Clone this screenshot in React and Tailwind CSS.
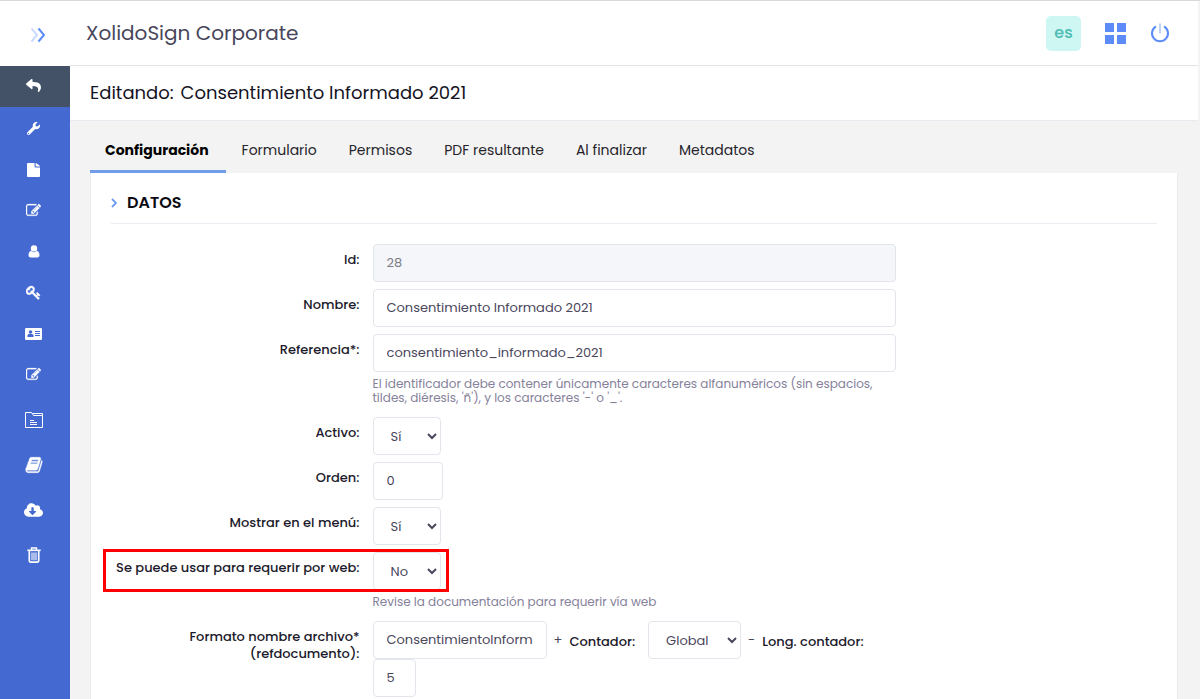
import { useState } from "react";
import {
  FaReply,
  FaWrench,
  FaFile,
  FaCloudDownloadAlt,
} from "react-icons/fa";

function EditIcon() {
  return (
    <svg viewBox="0 0 1792 1792" className="size-[15px]" fill="currentColor" stroke="currentColor" strokeWidth="30">
      <path d="M888 1184l116-116-152-152-116 116v56h96v96h56zm440-720q-16-16-33 1l-350 350q-17 17-1 33t33-1l350-350q17-17 1-33zm80 594v190q0 119-84.5 203.5t-203.5 84.5h-832q-119 0-203.5-84.5t-84.5-203.5v-832q0-119 84.5-203.5t203.5-84.5h832q63 0 117 25 15 7 18 23 3 17-9 29l-49 49q-14 14-32 8-23-6-45-6h-832q-66 0-113 47t-47 113v832q0 66 47 113t113 47h832q66 0 113-47t47-113v-126q0-13 9-22l64-64q15-15 35-7t20 29zm-96-738l288 288-672 672h-288v-288zm444 132l-92 92-288-288 92-92q28-28 68-28t68 28l152 152q28 28 28 68t-28 68z" />
    </svg>
  );
}

function UserIcon() {
  return (
    <svg viewBox="0 0 12 13" className="h-[13px] w-3" fill="currentColor">
      <circle cx="6" cy="3.4" r="3.2" />
      <path d="M3 5.8C1.2 6.4.5 8.2.5 10.3c0 1.3.8 2.2 2 2.2h7c1.2 0 2-.9 2-2.2 0-2.1-.7-3.9-2.5-4.5C8.2 6.7 7.2 7.2 6 7.2S3.8 6.7 3 5.8z" />
    </svg>
  );
}

function KeyIcon() {
  return (
    <svg viewBox="0 0 1792 1792" className="size-[15px]" fill="currentColor" stroke="currentColor" strokeWidth="50">
      <path d="M832 512q0-80-56-136t-136-56-136 56-56 136q0 42 19 83-41-19-83-19-80 0-136 56t-56 136 56 136 136 56 136-56 56-136q0-42-19-83 41 19 83 19 80 0 136-56t56-136zm851 704q0 17-49 66t-66 49q-9 0-28.5-16t-36.5-33-38.5-40-24.5-26l-96 96 220 220q28 28 28 68 0 42-39 81t-81 39q-40 0-68-28l-671-671q-176 131-365 131-163 0-265.5-102.5t-102.5-265.5q0-160 95-313t248-248 313-95q163 0 265.5 102.5t102.5 265.5q0 189-131 365l355 355 96-96q-3-3-26-24.5t-40-38.5-33-36.5-16-28.5q0-17 49-66t66-49q13 0 23 10 6 6 46 44.5t82 79.5 86.5 86 73 78 28.5 41z" />
    </svg>
  );
}

function CardIcon() {
  return (
    <svg viewBox="0 0 17 12" className="h-3 w-[17px]">
      <rect width="17" height="12" rx="1.2" fill="#fff" />
      <g fill="#446ad2">
        <circle cx="5.5" cy="4" r="1.8" />
        <path d="M2.5 9V7.6C2.5 6.5 3.3 6 4.2 6h2.6c.9 0 1.700.5 1.700 1.600V9z" />
        <path d="M10 3h5v1h-5zM10 5h5v1h-5zM10 7h5v1h-5z" />
      </g>
    </svg>
  );
}

function FolderIcon() {
  return (
    <svg viewBox="0 0 18 16" className="h-4 w-[18px]" fill="none" stroke="currentColor">
      <path d="M.5 15.500V.5h6l2 3h9v12z" />
      <path d="M7.500 1.500h10v2.500" />
      <path d="M5 8.500h4M5 10.500h7M5 12.500h7" />
    </svg>
  );
}

function BookIcon() {
  return (
    <svg viewBox="0 0 1792 1792" className="size-[18px]" fill="currentColor" stroke="currentColor" strokeWidth="40">
      <path d="M1703 478q40 57 18 129l-275 906q-19 64-76.5 107.5t-122.5 43.5h-923q-77 0-148.5-53.5t-99.5-131.5q-24-67-2-127 0-4 3-27t4-37q1-8-3-21.5t-3-19.5q2-11 8-21t16.5-23.5 16.5-23.5q23-38 45-91.5t30-91.5q3-10 .5-30t-.5-28q3-11 17-28t17-23q21-36 42-92t25-90q1-9-2.5-32t.5-28q4-13 22-30.5t22-22.5q19-26 42.5-84.5t27.5-96.5q1-8-3-25.5t-2-26.5q2-8 9-18t18-23 17-21q8-12 16.5-30.5t15-35 16-36 19.500-32 26.500-23.500 36-11.500 47.500 5.500l-1 3q38-9 51-9h761q74 0 114 56t18 130l-274 906q-36 119-71.5 153.5t-128.5 34.5h-869q-27 0-38 15-11 16-1 43 24 70 144 70h923q29 0 56-15.5t35-41.5l300-987q7-22 5-57 38 15 59 43zm-1064 2q-4 13 2 22.5t20 9.5h608q13 0 25.5-9.5t16.5-22.5l21-64q4-13-2-22.5t-20-9.5h-608q-13 0-25.5 9.5t-16.5 22.5zm-83 256q-4 13 2 22.5t20 9.5h608q13 0 25.5-9.5t16.5-22.5l21-64q4-13-2-22.5t-20-9.5h-608q-13 0-25.5 9.5t-16.5 22.5z" />
    </svg>
  );
}

function TrashIcon() {
  return (
    <svg viewBox="0 0 14 16" className="h-4 w-3.5" fill="none" stroke="currentColor">
      <path d="M.3 3.300h13.400" strokeWidth="1.600" />
      <path d="M4.500 3V1h5v2" strokeWidth="1.400" />
      <path d="M2.300 4v9.800c0 .8.500 1.300 1.200 1.300h7c.7 0 1.200-.5 1.200-1.300V4" strokeWidth="1.700" />
      <path d="M5 5.500v7.700M7 5.500v7.700M9 5.500v7.700" strokeWidth="1.100" />
    </svg>
  );
}

const mainMenu = [
  { label: "Herramientas", icon: <FaWrench className="size-[13px]" /> },
  { label: "Documento", icon: <FaFile className="h-3.5 w-[13px]" preserveAspectRatio="none" /> },
  { label: "Editar", icon: <EditIcon /> },
  { label: "Usuario", icon: <UserIcon /> },
  { label: "Claves", icon: <KeyIcon /> },
  { label: "Ficha", icon: <CardIcon /> },
  { label: "Editar plantilla", icon: <EditIcon /> },
];

const extraMenu = [
  { label: "Carpetas", icon: <FolderIcon /> },
  { label: "Manual", icon: <BookIcon /> },
  { label: "Descargas", icon: <FaCloudDownloadAlt className="h-[18px] w-[19px]" /> },
  { label: "Papelera", icon: <TrashIcon /> },
];

const tabs = [
  "Configuración",
  "Formulario",
  "Permisos",
  "PDF resultante",
  "Al finalizar",
  "Metadatos",
];

const control =
  "h-[38px] rounded-[4px] border border-[#e2e5ec] bg-white px-[13px] text-[13px] text-[#4a465c] outline-none";

function Row({ label, htmlFor, children, marked }) {
  return (
    <div className="relative grid grid-cols-4">
      <label
        htmlFor={htmlFor}
        className="pt-[7px] pr-[13px] text-right text-[13px] leading-[17px] font-medium text-[#1c1a2b]"
      >
        {label}
      </label>
      <div className="col-span-2">{children}</div>
      {/* recuadro de aviso */}
      {marked && (
        <div className="pointer-events-none absolute -top-[3px] -left-2 h-[43px] w-[calc(25%+84px)] border-3 border-[#fe0000]" />
      )}
    </div>
  );
}

function YesNo({ id, value, onChange }) {
  return (
    <select
      id={id}
      value={value}
      onChange={(e) => onChange(e.target.value)}
      className={`${control} block w-[68px]`}
    >
      <option>Sí</option>
      <option>No</option>
    </select>
  );
}

export default function App() {
  const [tab, setTab] = useState("Configuración");
  const [form, setForm] = useState({
    nombre: "Consentimiento Informado 2021",
    referencia: "consentimiento_informado_2021",
    activo: "Sí",
    orden: "0",
    menu: "Sí",
    web: "No",
    formato: "ConsentimientoInform",
    contador: "Global",
    longitud: "5",
  });

  const set = (key) => (value) => setForm({ ...form, [key]: value });

  return (
    <div className="flex min-h-screen flex-col border-t border-[#d9d9d9] bg-[#f3f3f3] pr-0.5 font-['Poppins','Inter',sans-serif]">
      {/* cabecera */}
      <header className="flex h-[65px] bg-white">
        <div className="flex w-[70px] items-center justify-center pt-0.5 pl-1.5">
          <button aria-label="Desplegar menú">
            <svg viewBox="0 0 16 16" className="size-4" fill="none" strokeWidth="2">
              <path d="M1.500 1.500L7 8l-5.500 6.500" stroke="#c9dcff" />
              <path d="M8.500 1.500L14 8l-5.500 6.500" stroke="#5d8cf9" />
            </svg>
          </button>
        </div>
        <div className="flex flex-1 items-center justify-between border-b border-[#e4e4e6] pr-7 pl-4">
          <h1 className="text-xl text-[#48465b]">XolidoSign Corporate</h1>
          <div className="flex items-center">
            <button className="size-[35px] rounded-[5px] bg-[#cef6f3] text-base font-medium text-[#4dbdb2]">
              es
            </button>
            <button aria-label="Aplicaciones" className="ml-6">
              <svg viewBox="0 0 21 21" className="size-[21px]" fill="#5d8cf9">
                <path d="M0 0h9v9H0zM12 0h9v9h-9zM0 12h9v9H0zM12 12h9v9h-9z" />
              </svg>
            </button>
            <button aria-label="Salir" className="ml-6">
              <svg viewBox="0 0 20 20" className="size-5" fill="none">
                <path d="M6 3.300A8 8 0 1 0 14 3.300" stroke="#5d8cf9" strokeWidth="2" />
                <path d="M10 .5v10" stroke="#bcd3fd" strokeWidth="2" />
              </svg>
            </button>
          </div>
        </div>
      </header>

      <div className="flex flex-1">
        {/* menú lateral */}
        <nav className="w-[70px] bg-[#446ad2] text-white">
          <a
            href="#volver"
            aria-label="Volver"
            className="flex h-[41px] items-center justify-center bg-[#445268] pr-[3px] pb-0.5"
          >
            <FaReply className="size-[15px]" />
          </a>
          <ul className="mt-px">
            {mainMenu.map((m) => (
              <li key={m.label}>
                <a
                  href="#menu"
                  aria-label={m.label}
                  className="flex h-[41px] items-center justify-center pr-[3px]"
                >
                  {m.icon}
                </a>
              </li>
            ))}
          </ul>
          <ul className="mt-0.5">
            {extraMenu.map((m) => (
              <li key={m.label}>
                <a
                  href="#menu"
                  aria-label={m.label}
                  className="flex h-[45px] items-center justify-center pr-[3px]"
                >
                  {m.icon}
                </a>
              </li>
            ))}
          </ul>
        </nav>

        <main className="flex flex-1 flex-col">
          <div className="flex h-[55px] items-center border-b border-[#e9e9f0] bg-white px-5">
            <h2 className="flex gap-[7px] text-lg text-[#15131f]">
              <span>Editando:</span>
              <span>Consentimiento Informado 2021</span>
            </h2>
          </div>

          <div className="flex flex-1 flex-col px-5">
            <div className="flex h-[52px]">
              {tabs.map((t) => (
                <button
                  key={t}
                  onClick={() => setTab(t)}
                  className={
                    t === tab
                      ? "border-b-3 border-[#719de8] pt-[9px] pr-[17px] pl-[15px] text-[14px] font-bold text-black"
                      : "border-b-3 border-transparent px-4 pt-[9px] text-[14px] text-[#26242b]"
                  }
                >
                  {t}
                </button>
              ))}
            </div>

            <section className="flex-1 border-x border-[#ebebeb] bg-white px-5">
              <h3 className="flex h-[51px] items-center gap-2.5 border-b border-[#ebedf2] pt-2.5 text-base font-semibold text-[#0d0c14]">
                <svg viewBox="0 0 6 10" className="h-2.5 w-1.5" fill="none">
                  <path d="M1 1l4 4-4 4" stroke="#6f9cf0" strokeWidth="1.800" />
                </svg>
                DATOS
              </h3>

              <form className="mt-5 flex flex-col gap-[7px]">
                <Row label="Id:" htmlFor="id">
                  <input
                    id="id"
                    disabled
                    value="28"
                    className="block h-[38px] w-full rounded-[4px] border border-[#e2e5ec] bg-[#f4f6fa] px-[13px] text-[13px] text-[#7c7c84]"
                  />
                </Row>
                <Row label="Nombre:" htmlFor="nombre">
                  <input
                    id="nombre"
                    value={form.nombre}
                    onChange={(e) => set("nombre")(e.target.value)}
                    className={`${control} block w-full`}
                  />
                </Row>
                <Row label="Referencia*:" htmlFor="referencia">
                  <input
                    id="referencia"
                    value={form.referencia}
                    onChange={(e) => set("referencia")(e.target.value)}
                    className={`${control} block w-full`}
                  />
                  <p className="mt-[5px] mb-[5px] text-[12px] leading-[14px] text-[#85819a]">
                    El identificador debe contener únicamente caracteres alfanuméricos (sin espacios,
                    tildes, diéresis, 'ñ'), y los caracteres '-' o '_'.
                  </p>
                </Row>
                <Row label="Activo:" htmlFor="activo">
                  <YesNo id="activo" value={form.activo} onChange={set("activo")} />
                </Row>
                <Row label="Orden:" htmlFor="orden">
                  <input
                    id="orden"
                    value={form.orden}
                    onChange={(e) => set("orden")(e.target.value)}
                    className={`${control} block w-[70px]`}
                  />
                </Row>
                <Row label="Mostrar en el menú:" htmlFor="menu">
                  <YesNo id="menu" value={form.menu} onChange={set("menu")} />
                </Row>
                <Row label="Se puede usar para requerir por web:" htmlFor="web" marked>
                  <YesNo id="web" value={form.web} onChange={set("web")} />
                  <p className="mt-[5px] mb-[5px] text-[12px] leading-[14px] text-[#85819a]">
                    Revise la documentación para requerir vía web
                  </p>
                </Row>
                <Row
                  label={
                    <>
                      Formato nombre archivo*
                      <br />
                      (refdocumento):
                    </>
                  }
                  htmlFor="formato"
                >
                  <div className="flex flex-wrap items-center text-[13px] text-[#4a465c]">
                    <input
                      id="formato"
                      value={form.formato}
                      onChange={(e) => set("formato")(e.target.value)}
                      className={`${control} w-[174px]`}
                    />
                    <span className="mx-[7px]">+</span>
                    <label htmlFor="contador" className="mr-[13px] pt-1 font-medium text-[#1c1a2b]">
                      Contador:
                    </label>
                    <select
                      id="contador"
                      value={form.contador}
                      onChange={(e) => set("contador")(e.target.value)}
                      className={`${control} w-[93px]`}
                    >
                      <option>Global</option>
                      <option>Anual</option>
                    </select>
                    <span className="mx-[7px]">-</span>
                    <label htmlFor="longitud" className="mr-[13px] pt-1 font-medium text-[#1c1a2b]">
                      Long. contador:
                    </label>
                    <input
                      id="longitud"
                      value={form.longitud}
                      onChange={(e) => set("longitud")(e.target.value)}
                      className={`${control} w-[43px]`}
                    />
                  </div>
                </Row>
              </form>
            </section>
          </div>
        </main>
      </div>
    </div>
  );
}
